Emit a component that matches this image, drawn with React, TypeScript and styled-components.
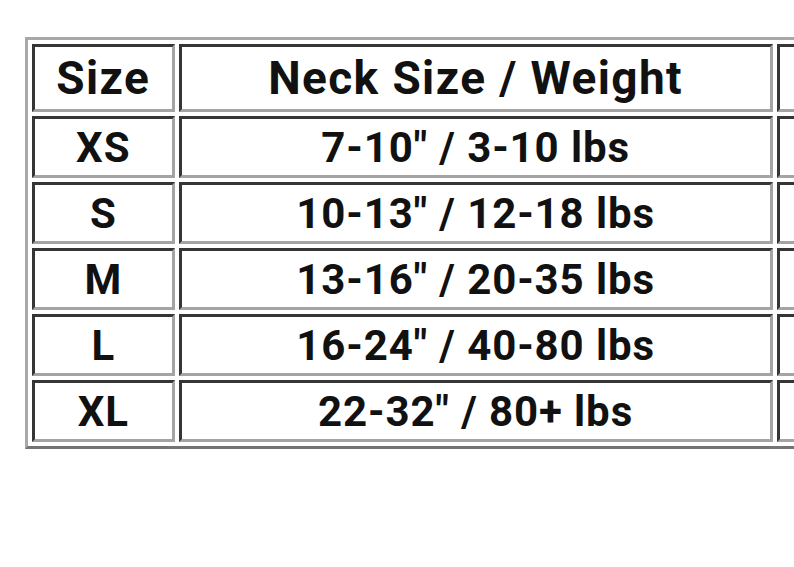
import React, { FC } from "react";
import styled, { createGlobalStyle } from "styled-components";

const GlobalStyle = createGlobalStyle`
  html, body {
    margin: 0;
    padding: 0;
    background: #fff;
    overflow: hidden;
  }
  body {
    font-family: Roboto, "Liberation Sans", Arial, sans-serif;
  }
`;

const Page = styled.div`
  width: 794px;
  height: 567px;
  padding: 37px 0 0 25px;
  box-sizing: border-box;
  overflow: hidden;
`;

const SizeTable = styled.table`
  table-layout: fixed;
  border-collapse: separate;
  border-spacing: 4px;
  border-style: solid;
  border-width: 3px;
  border-color: #a8a8a8 #747474 #747474 #a8a8a8;
  width: 1100px;
`;

const Cell = styled.td<{ $head?: boolean }>`
  height: ${(p) => (p.$head ? "62px" : "56px")};
  padding: 0;
  border-style: solid;
  border-width: 3px;
  border-color: #353535 #a4a4a4 #a4a4a4 #353535;
  text-align: center;
  vertical-align: middle;
  font-family: Roboto, "Liberation Sans", Arial, sans-serif;
  font-weight: 700;
  font-size: ${(p) => (p.$head ? "46px" : "42px")};
  letter-spacing: ${(p) => (p.$head ? "1.4px" : "0.9px")};
  color: #111;
  white-space: nowrap;
  overflow: hidden;
`;

type Row = {
  size: string;
  fit: string;
};

const rows: Row[] = [
  { size: "XS", fit: '7-10" / 3-10 lbs' },
  { size: "S", fit: '10-13" / 12-18 lbs' },
  { size: "M", fit: '13-16" / 20-35 lbs' },
  { size: "L", fit: '16-24" / 40-80 lbs' },
  { size: "XL", fit: '22-32" / 80+ lbs' },
];

const App: FC = () => {
  return (
    <Page>
      <GlobalStyle />
      <SizeTable>
        <colgroup>
          <col style={{ width: 142 }} />
          <col style={{ width: 592 }} />
          <col style={{ width: 340 }} />
        </colgroup>
        <tbody>
          <tr>
            <Cell $head>Size</Cell>
            <Cell $head>Neck Size / Weight</Cell>
            <Cell $head />
          </tr>
          {rows.map((row) => (
            <tr key={row.size}>
              <Cell>{row.size}</Cell>
              <Cell>{row.fit}</Cell>
              <Cell />
            </tr>
          ))}
        </tbody>
      </SizeTable>
    </Page>
  );
};

export default App;
